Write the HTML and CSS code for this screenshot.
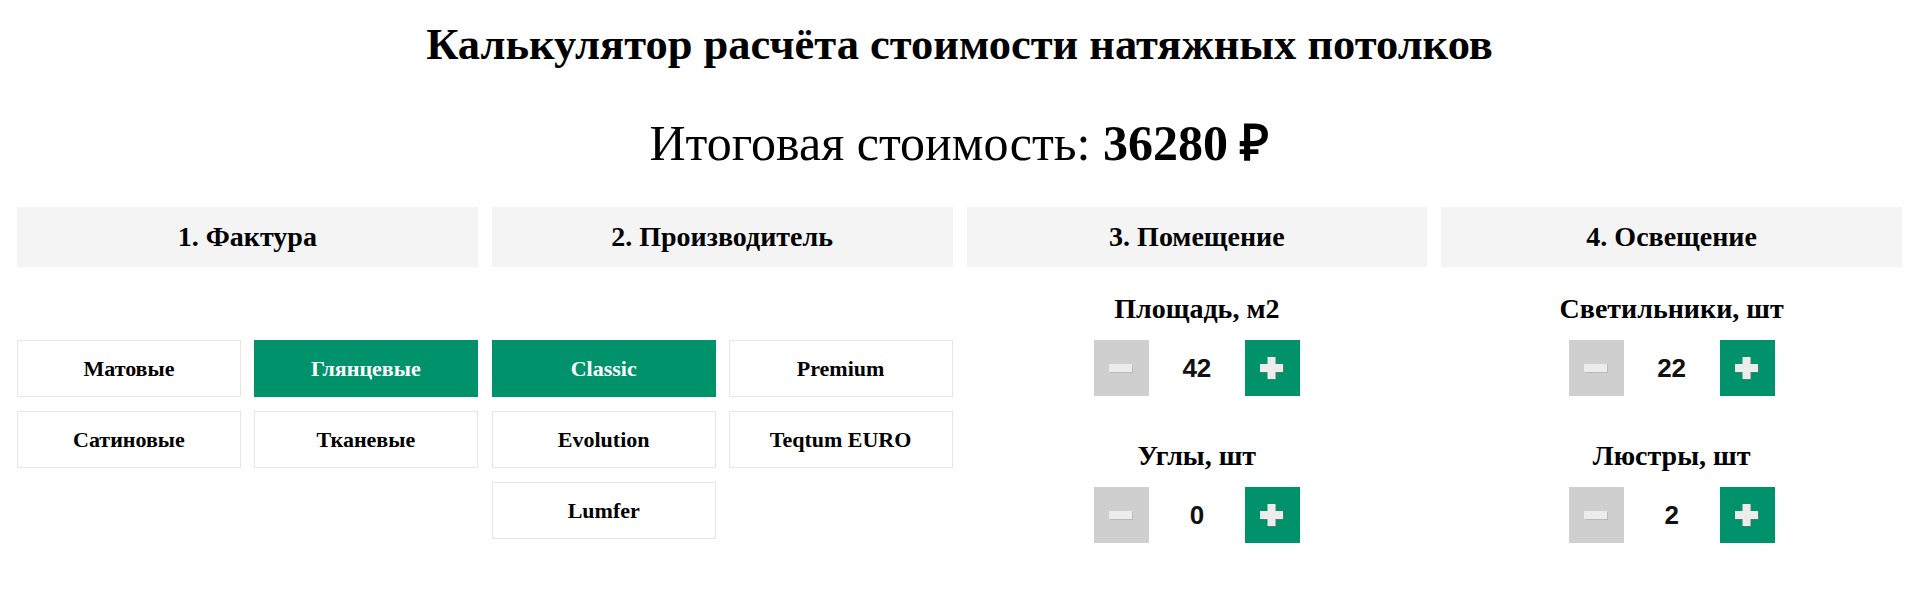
FILE: index.html
```html
<!DOCTYPE html>
<html lang="ru">
<head>
<meta charset="utf-8">
<title>Калькулятор натяжных потолков</title>
<link rel="stylesheet" href="styles.css">
</head>
<body>
<h1 class="title">Калькулятор расчёта стоимости натяжных потолков</h1>
<div class="total">Итоговая стоимость: <b>36280 ₽</b></div>
<div class="calc">
  <section class="col">
    <div class="col-head">1. Фактура</div>
    <div class="options">
      <div class="opt">Матовые</div>
      <div class="opt active">Глянцевые</div>
      <div class="opt">Сатиновые</div>
      <div class="opt">Тканевые</div>
    </div>
  </section>
  <section class="col">
    <div class="col-head">2. Производитель</div>
    <div class="options">
      <div class="opt active">Classic</div>
      <div class="opt">Premium</div>
      <div class="opt">Evolution</div>
      <div class="opt">Teqtum EURO</div>
      <div class="opt">Lumfer</div>
    </div>
  </section>
  <section class="col">
    <div class="col-head">3. Помещение</div>
    <div class="fields">
      <div class="field">
        <div class="field-label">Площадь, м2</div>
        <div class="stepper">
          <span class="step minus"><svg width="24" height="9" viewBox="0 0 24 9"><rect x="1" y="1" width="23" height="8" fill="#b9b9b9"/><rect x="0" y="0" width="23" height="8" fill="#ececec"/></svg></span>
          <span class="value">42</span>
          <span class="step plus"><svg width="24" height="23" viewBox="0 0 24 23"><g fill="#7d6f5f" opacity="0.6"><rect x="1" y="8" width="23" height="8"/><rect x="8.5" y="1" width="8" height="22"/></g><g fill="#ececec"><rect x="0" y="7" width="23" height="8"/><rect x="7.5" y="0" width="8" height="22"/></g></svg></span>
        </div>
      </div>
      <div class="field">
        <div class="field-label">Углы, шт</div>
        <div class="stepper">
          <span class="step minus"><svg width="24" height="9" viewBox="0 0 24 9"><rect x="1" y="1" width="23" height="8" fill="#b9b9b9"/><rect x="0" y="0" width="23" height="8" fill="#ececec"/></svg></span>
          <span class="value">0</span>
          <span class="step plus"><svg width="24" height="23" viewBox="0 0 24 23"><g fill="#7d6f5f" opacity="0.6"><rect x="1" y="8" width="23" height="8"/><rect x="8.5" y="1" width="8" height="22"/></g><g fill="#ececec"><rect x="0" y="7" width="23" height="8"/><rect x="7.5" y="0" width="8" height="22"/></g></svg></span>
        </div>
      </div>
    </div>
  </section>
  <section class="col">
    <div class="col-head">4. Освещение</div>
    <div class="fields">
      <div class="field">
        <div class="field-label">Светильники, шт</div>
        <div class="stepper">
          <span class="step minus"><svg width="24" height="9" viewBox="0 0 24 9"><rect x="1" y="1" width="23" height="8" fill="#b9b9b9"/><rect x="0" y="0" width="23" height="8" fill="#ececec"/></svg></span>
          <span class="value">22</span>
          <span class="step plus"><svg width="24" height="23" viewBox="0 0 24 23"><g fill="#7d6f5f" opacity="0.6"><rect x="1" y="8" width="23" height="8"/><rect x="8.5" y="1" width="8" height="22"/></g><g fill="#ececec"><rect x="0" y="7" width="23" height="8"/><rect x="7.5" y="0" width="8" height="22"/></g></svg></span>
        </div>
      </div>
      <div class="field">
        <div class="field-label">Люстры, шт</div>
        <div class="stepper">
          <span class="step minus"><svg width="24" height="9" viewBox="0 0 24 9"><rect x="1" y="1" width="23" height="8" fill="#b9b9b9"/><rect x="0" y="0" width="23" height="8" fill="#ececec"/></svg></span>
          <span class="value">2</span>
          <span class="step plus"><svg width="24" height="23" viewBox="0 0 24 23"><g fill="#7d6f5f" opacity="0.6"><rect x="1" y="8" width="23" height="8"/><rect x="8.5" y="1" width="8" height="22"/></g><g fill="#ececec"><rect x="0" y="7" width="23" height="8"/><rect x="7.5" y="0" width="8" height="22"/></g></svg></span>
        </div>
      </div>
    </div>
  </section>
</div>
</body>
</html>
```

FILE: styles.css
```css
html, body {
  margin: 0;
  padding: 0;
  background: #fff;
}
body {
  font-family: "Liberation Serif", "Times New Roman", serif;
  color: #000;
}
.title {
  margin: 18px 0 0;
  font-size: 44.5px;
  line-height: 52px;
  font-weight: bold;
  text-align: center;
}
.total {
  margin-top: 44px;
  font-size: 50px;
  line-height: 58px;
  text-align: center;
}
.total b {
  font-weight: bold;
}
.calc {
  display: grid;
  grid-template-columns: repeat(4, 1fr);
  column-gap: 14px;
  padding: 0 17px;
  margin-top: 35px;
}
.col-head {
  background: #f4f4f4;
  height: 60px;
  line-height: 60px;
  font-size: 28px;
  font-weight: bold;
  text-align: center;
}
.options {
  display: grid;
  grid-template-columns: 1fr 1fr;
  gap: 14px 13px;
  padding-top: 73px;
}
.opt {
  box-sizing: border-box;
  height: 57px;
  border: 1px solid #e6e6e6;
  display: flex;
  align-items: center;
  justify-content: center;
  font-size: 22px;
  font-weight: bold;
}
.opt.active {
  background: #00936b;
  border-color: #00936b;
  color: #fff;
}
.fields {
  padding-top: 26px;
  display: flex;
  flex-direction: column;
  gap: 44px;
}
.field {
  display: flex;
  flex-direction: column;
  align-items: center;
}
.field-label {
  font-size: 28px;
  line-height: 32px;
  font-weight: bold;
  margin-bottom: 15px;
}
.stepper {
  display: flex;
  align-items: center;
}
.step {
  width: 55px;
  height: 56px;
  display: flex;
  align-items: center;
  justify-content: center;
}
.step svg {
  display: block;
}
.minus {
  background: #cfcfcf;
}
.plus {
  background: #00936b;
}
.value {
  width: 96px;
  text-align: center;
  font-family: "Liberation Sans", Arial, sans-serif;
  font-weight: bold;
  font-size: 26px;
  color: #111;
}
```
